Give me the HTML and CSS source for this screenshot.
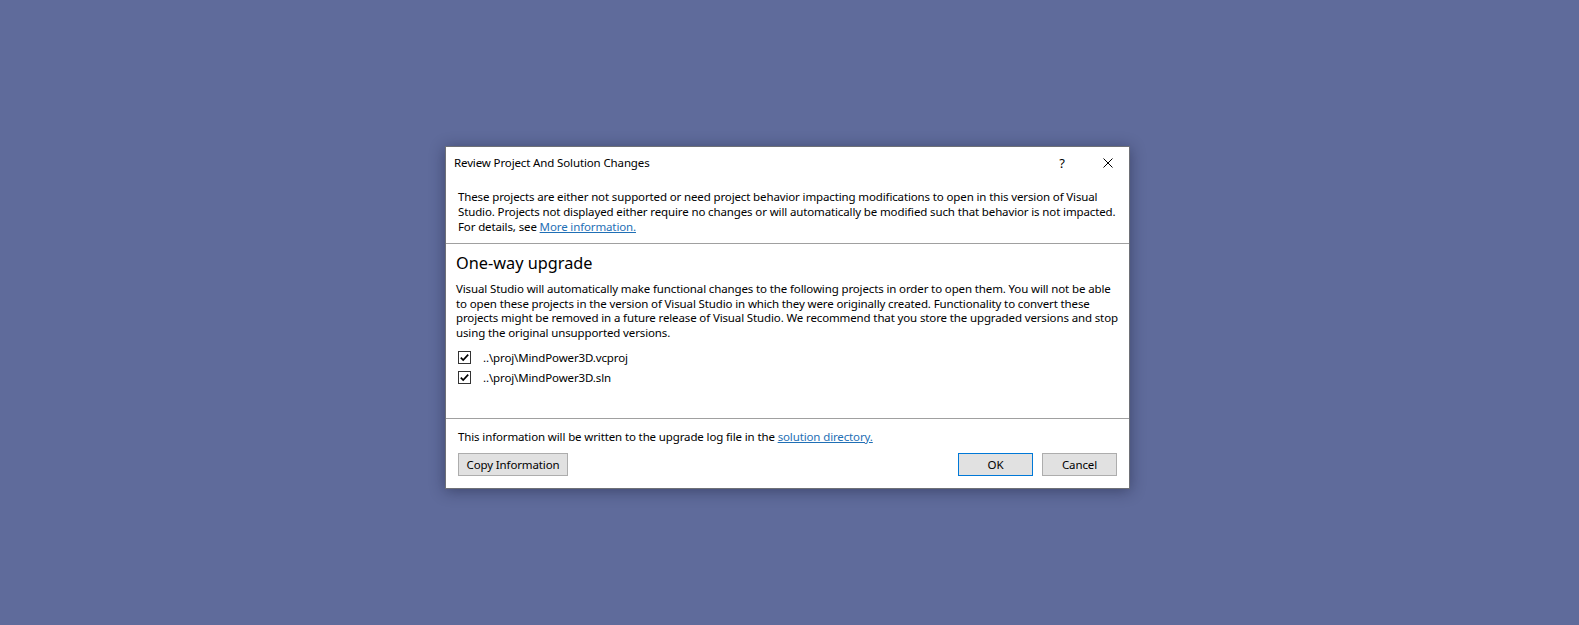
FILE: index.html
```html
<!DOCTYPE html>
<html lang="en">
<head>
<meta charset="utf-8">
<title>Review Project And Solution Changes</title>
<link rel="stylesheet" href="styles.css">
</head>
<body>
<div class="stage">
  <div class="dialog">
    <div class="titlebar">
      <span class="title">Review Project And Solution Changes</span>
      <div class="tb-buttons">
        <span class="tb-btn help">?</span>
        <span class="tb-btn close">
          <svg width="10" height="10" viewBox="0 0 10 10"><path d="M0.5 0.5 L9.5 9.5 M9.5 0.5 L0.5 9.5" stroke="#000" stroke-width="1" fill="none"/></svg>
        </span>
      </div>
    </div>
    <div class="intro">
      These projects are either not supported or need project behavior impacting modifications to open in this version of Visual<br>
      Studio. Projects not displayed either require no changes or will automatically be modified such that behavior is not impacted.<br>
      For details, see <a class="link" href="#">More information.</a>
    </div>
    <div class="main">
      <h2 class="heading">One-way upgrade</h2>
      <p class="para">
        Visual Studio will automatically make functional changes to the following projects in order to open them. You will not be able<br>
        to open these projects in the version of Visual Studio in which they were originally created. Functionality to convert these<br>
        projects might be removed in a future release of Visual Studio. We recommend that you store the upgraded versions and stop<br>
        using the original unsupported versions.
      </p>
      <ul class="items">
        <li class="item">
          <svg class="cb" width="13" height="13" viewBox="0 0 13 13"><rect x="0.5" y="0.5" width="12" height="12" fill="#fff" stroke="#333"/><path d="M2.8 6.6 L5.2 9 L10.2 3.6" stroke="#000" stroke-width="1.7" fill="none"/></svg>
          <span>..\proj\MindPower3D.vcproj</span>
        </li>
        <li class="item">
          <svg class="cb" width="13" height="13" viewBox="0 0 13 13"><rect x="0.5" y="0.5" width="12" height="12" fill="#fff" stroke="#333"/><path d="M2.8 6.6 L5.2 9 L10.2 3.6" stroke="#000" stroke-width="1.7" fill="none"/></svg>
          <span>..\proj\MindPower3D.sln</span>
        </li>
      </ul>
    </div>
    <div class="footer">
      <div class="footnote">This information will be written to the upgrade log file in the <a class="link" href="#">solution directory.</a></div>
      <div class="actions">
        <button class="btn copy">Copy Information</button>
        <div class="right-actions">
          <button class="btn default">OK</button>
          <button class="btn">Cancel</button>
        </div>
      </div>
    </div>
  </div>
</div>
</body>
</html>
```
FILE: styles.css
```css
* { box-sizing: border-box; }
html, body { margin: 0; padding: 0; }
body {
  background: #5f6b9b;
  width: 1579px;
  height: 625px;
  overflow: hidden;
  font-family: "Noto Sans", "Open Sans", sans-serif;
  font-size: 11.5px;
  letter-spacing: -0.13px;
  color: #000;
}
.stage {
  padding: 146px 0 0 445px;
}
.dialog {
  width: 685px;
  background: #fff;
  border: 1px solid #6e7077;
  box-shadow: 0 2px 14px rgba(20, 25, 50, 0.45);
  display: flex;
  flex-direction: column;
}
.titlebar {
  height: 31px;
  display: flex;
  align-items: center;
  justify-content: space-between;
  padding-left: 8px;
}
.tb-buttons { display: flex; height: 100%; margin-right: -1px; }
.tb-btn {
  width: 46px;
  height: 100%;
  display: flex;
  align-items: center;
  justify-content: center;
}
.help { font-size: 13px; letter-spacing: 0; padding-left: 2px; }
.close { padding-left: 2px; }
.intro {
  padding: 11px 12px 9px 12px;
  line-height: 15px;
  white-space: nowrap;
  border-bottom: 1px solid #a0a0a0;
}
.link { color: #1f6fb5; text-decoration: underline; }
.main {
  padding: 7px 12px 0 10px;
  height: 175px;
  border-bottom: 1px solid #a0a0a0;
}
.heading {
  margin: 0;
  font-weight: normal;
  font-size: 16.3px;
  letter-spacing: 0;
  line-height: 24px;
}
.para {
  margin: 7px 0 0 0;
  line-height: 14.7px;
  white-space: nowrap;
}
.items {
  list-style: none;
  margin: 7px 0 0 2px;
  padding: 0;
}
.item {
  height: 20px;
  display: flex;
  align-items: center;
  gap: 12px;
}
.cb { flex: none; }
.footer {
  padding: 10px 12px 12px 12px;
}
.footnote { line-height: 15px; }
.actions {
  margin-top: 9px;
  display: flex;
  justify-content: space-between;
}
.right-actions { display: flex; gap: 9px; }
.btn {
  font-family: inherit;
  font-size: 11.5px;
  letter-spacing: -0.13px;
  color: #000;
  height: 23px;
  width: 75px;
  padding: 0;
  background: #e1e1e1;
  border: 1px solid #adadad;
  border-radius: 0;
}
.btn.copy { width: 110px; }
.btn.default { border-color: #0078d7; }
```
